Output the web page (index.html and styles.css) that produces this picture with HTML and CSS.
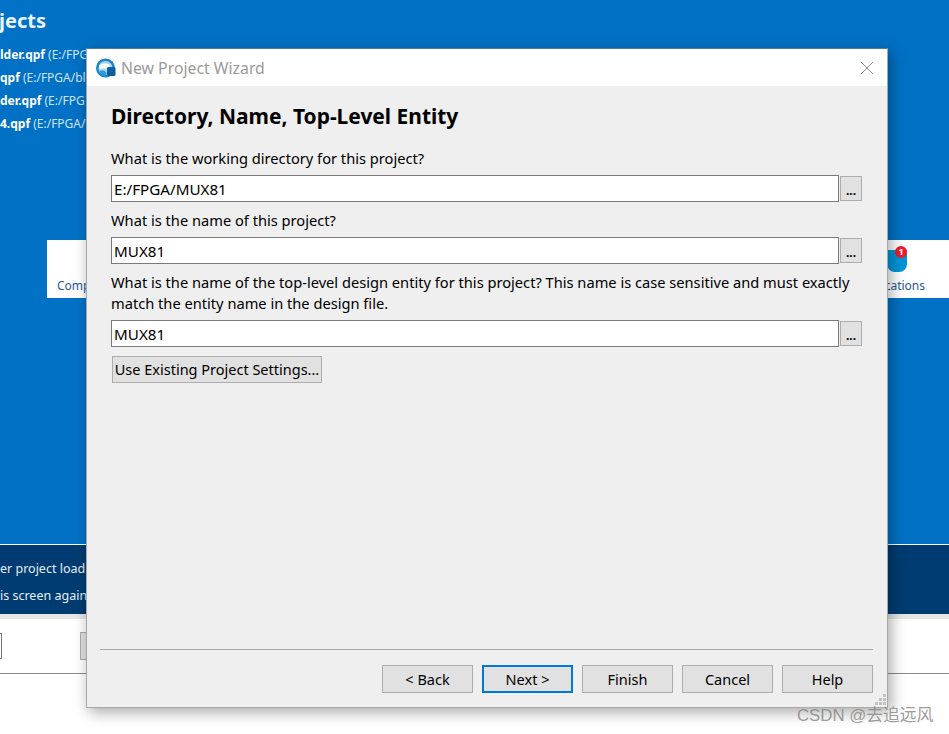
FILE: index.html
```html
<!DOCTYPE html>
<html lang="en">
<head>
<meta charset="utf-8">
<title>New Project Wizard</title>
<link rel="stylesheet" href="styles.css">
</head>
<body>
<div class="backdrop">
  <section class="hero">
    <h1 class="hero-title">jects</h1>
    <ul class="recent">
      <li class="recent-item"><b>lder.qpf</b> (E:/FPG</li>
      <li class="recent-item"><b>qpf</b> (E:/FPGA/bl</li>
      <li class="recent-item"><b>der.qpf</b> (E:/FPG</li>
      <li class="recent-item"><b>4.qpf</b> (E:/FPGA/</li>
    </ul>
    <div class="tiles">
      <span class="tile-left">Comp</span>
      <span class="tile-right">
        <span class="bell"><span class="badge">1</span></span>
        <span class="tile-label">cations</span>
      </span>
    </div>
  </section>
  <section class="notice">
    <p class="notice-line">er project load</p>
    <p class="notice-line">is screen again</p>
  </section>
  <section class="footer">
    <span class="footer-input"></span>
    <span class="footer-button"></span>
  </section>
</div>

<div class="wizard">
  <header class="titlebar">
    <svg class="app-icon" viewBox="0 0 20 20" width="20" height="20">
      <circle cx="9.500" cy="10" r="9.500" fill="#1c86c8"/>
      <circle cx="9.500" cy="10" r="7" fill="#a9d9f2"/>
      <path d="M3 8C6 5 10 5 14 7L13 11C9 10 6 9.500 4 11.500Z" fill="#fff"/>
      <path d="M3.500 13C6 11.500 8 12 10.500 14.500L10 17.500C7 17.500 4.500 15.500 3.500 13Z" fill="#2f9ad8"/>
      <rect x="11" y="9" width="8.500" height="9" rx="1.500" fill="#0f5f9e"/>
    </svg>
    <span class="window-title">New Project Wizard</span>
    <svg class="close-icon" viewBox="0 0 14 14" width="14" height="14">
      <path d="M1 1L13 13M13 1L1 13" stroke="#8c8c8c" stroke-width="1" fill="none"/>
    </svg>
  </header>
  <main class="content">
    <h2 class="page-title">Directory, Name, Top-Level Entity</h2>
    <label class="field-label first">What is the working directory for this project?</label>
    <div class="field-row">
      <span class="text-input">E:/FPGA/MUX81</span>
      <button class="browse" type="button">...</button>
    </div>
    <label class="field-label">What is the name of this project?</label>
    <div class="field-row">
      <span class="text-input">MUX81</span>
      <button class="browse" type="button">...</button>
    </div>
    <label class="field-label">What is the name of the top-level design entity for this project? This name is case sensitive and must exactly match the entity name in the design file.</label>
    <div class="field-row">
      <span class="text-input">MUX81</span>
      <button class="browse" type="button">...</button>
    </div>
    <button class="btn existing" type="button">Use Existing Project Settings...</button>
  </main>
  <footer class="actions">
    <div class="rule"></div>
    <div class="action-row">
      <button class="btn action" type="button">&lt; Back</button>
      <button class="btn action primary" type="button">Next &gt;</button>
      <button class="btn action" type="button">Finish</button>
      <button class="btn action" type="button">Cancel</button>
      <button class="btn action" type="button">Help</button>
    </div>
  </footer>
  <svg class="grip" viewBox="0 0 11 11" width="11" height="11">
    <g fill="#c2c2c2">
      <rect x="8" y="0" width="3" height="3"/>
      <rect x="4" y="4" width="3" height="3"/><rect x="8" y="4" width="3" height="3"/>
      <rect x="0" y="8" width="3" height="3"/><rect x="4" y="8" width="3" height="3"/><rect x="8" y="8" width="3" height="3"/>
    </g>
  </svg>
</div>

<div class="watermark">CSDN @去追远风</div>
</body>
</html>
```

FILE: styles.css
```css
* { box-sizing: border-box; }
html, body { margin: 0; padding: 0; }
body {
  width: 949px;
  height: 734px;
  overflow: hidden;
  position: relative;
  background: #fff;
  font-family: "Noto Sans", "Open Sans", "Liberation Sans", sans-serif;
}

/* Background window */
.backdrop { display: flex; flex-direction: column; height: 734px; }
.hero {
  height: 545px;
  background: #0071c5;
  border-bottom: 1px solid #fff;
  color: #fff;
  display: flex;
  flex-direction: column;
}
.hero-title {
  margin: 7px 0 0 -1px;
  font-size: 20px;
  line-height: 27px;
  font-weight: 700;
  color: #eaf4fb;
}
.recent { list-style: none; margin: 9px 0 0; padding: 0; }
.recent-item {
  height: 23px;
  line-height: 23px;
  font-size: 12px;
  color: #cfe4f4;
  white-space: nowrap;
}
.recent-item b { color: #fff; font-weight: 700; }
.tiles {
  margin: 105px 0 0 47px;
  height: 58px;
  background: #fff;
  position: relative;
  font-size: 12px;
  color: #1f5a96;
  display: flex;
  justify-content: space-between;
}
.tile-left { margin: 37px 0 0 10px; line-height: 18px; }
.tile-right {
  width: 110px;
  position: relative;
  display: flex;
  justify-content: flex-end;
}
.tile-label { margin: 37px 24px 0 0; line-height: 18px; }
.bell {
  position: absolute;
  left: 48px;
  top: 10px;
  width: 20px;
  height: 22px;
  background: #0095d9;
  border-radius: 0 0 8px 8px;
}
.badge {
  position: absolute;
  top: -4px;
  right: 0;
  width: 12px;
  height: 12px;
  border-radius: 50%;
  background: #ed1c2e;
  color: #fff;
  font-size: 9px;
  line-height: 12px;
  font-weight: 700;
  text-align: center;
}
.notice {
  height: 69px;
  background: #003c71;
  color: #e4eef6;
  font-size: 12.500px;
}
.notice-line { margin: 0; height: 27px; line-height: 26px; white-space: nowrap; }
.notice-line:first-child { margin-top: 11px; }
.footer {
  height: 60px;
  border-top: 5px solid #e6e6e6;
  border-bottom: 1px solid #8a8a8a;
  position: relative;
  display: flex;
  align-items: flex-start;
  padding-top: 14px;
}
.footer-input {
  width: 2px;
  height: 26px;
  border: 1px solid #777;
  border-left: 0;
  background: #fff;
}
.footer-button {
  margin: -1px 0 0 78px;
  width: 40px;
  height: 28px;
  background: #e1e1e1;
  border: 1px solid #adadad;
}

/* Wizard dialog floats over the background window */
.wizard {
  position: absolute;
  left: 86px;
  top: 48px;
  width: 802px;
  height: 660px;
  background: #efefef;
  border: 1px solid #a8a8a8;
  border-top-color: #4b7ea6;
  box-shadow: 3px 4px 14px rgba(0, 0, 0, 0.35);
  display: flex;
  flex-direction: column;
}
.titlebar {
  height: 37px;
  flex: none;
  background: #fff;
  display: flex;
  align-items: center;
  padding: 0 13px 0 9px;
  gap: 5px;
}
.app-icon { flex: none; }
.window-title { font-size: 15.800px; color: #9a9a9a; flex: 1; white-space: nowrap; }
.close-icon { flex: none; }

.content {
  flex: 1;
  padding: 0 24px;
  display: flex;
  flex-direction: column;
  align-items: flex-start;
  color: #000;
  font-size: 14.650px;
}
.page-title {
  margin: 15px 0 0;
  font-size: 20.960px;
  line-height: 30px;
  font-weight: 700;
}
.field-label { display: block; line-height: 21px; width: 752px; }
.field-label.first { margin-top: 17px; }
.field-row { display: flex; gap: 1px; width: 751px; align-items: flex-start; }
.field-row + .field-label { margin-top: 8px; }
.field-label + .field-row { margin-top: 6px; }
.text-input {
  flex: 1;
  height: 27px;
  line-height: 26px;
  background: #fff;
  border: 1px solid #7a7a7a;
  padding-left: 2px;
  font-size: 15.200px;
}
.browse {
  flex: none;
  width: 22px;
  height: 25px;
  margin-top: 1px;
  padding: 0;
  background: #e1e1e1;
  border: 1px solid #adadad;
  font: 700 12px/28px "Noto Sans", sans-serif;
  color: #000;
}
.btn {
  background: #e1e1e1;
  border: 1px solid #adadad;
  font: 14.500px "Noto Sans", "Open Sans", sans-serif;
  color: #000;
  padding: 0;
}
.existing { margin: 9px 0 0 1px; width: 210px; height: 27px; padding-bottom: 2px; }

.actions { flex: none; padding: 0 14px 0 13px; height: 58px; }
.rule { height: 1px; background: #a9a9a9; }
.action-row {
  display: flex;
  justify-content: flex-end;
  gap: 9px;
  margin-top: 15px;
}
.action { width: 91px; height: 28px; }
.primary { border: 2px solid #0078d7; }
.grip { position: absolute; right: 1px; bottom: 2px; }

.watermark {
  position: absolute;
  left: 797px;
  top: 705px;
  font-size: 16.800px;
  line-height: 22px;
  color: rgba(130, 130, 130, 0.8);
  font-family: "Liberation Sans", "Noto Sans CJK SC", sans-serif;
  white-space: nowrap;
}
```
